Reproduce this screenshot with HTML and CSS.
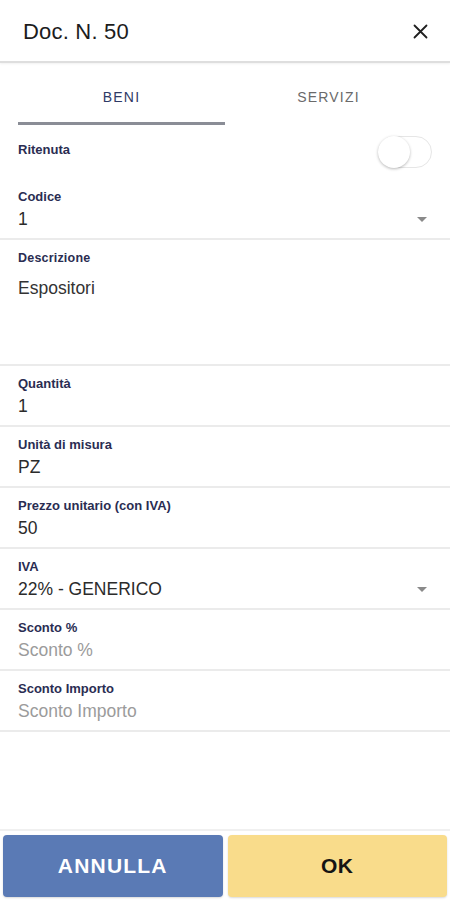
FILE: index.html
```html
<!DOCTYPE html>
<html lang="it">
<head>
<meta charset="utf-8">
<title>Doc. N. 50</title>
<link rel="stylesheet" href="styles.css">
</head>
<body>
<div class="screen">
  <header class="header">
    <h1 class="title">Doc. N. 50</h1>
    <button class="close" aria-label="Chiudi">
      <svg width="15" height="15" viewBox="0 0 15 15"><path d="M1.5 1.5 L13.5 13.5 M13.5 1.5 L1.5 13.5" stroke="#1f1f1f" stroke-width="1.8" stroke-linecap="round" fill="none"/></svg>
    </button>
  </header>

  <nav class="tabs">
    <div class="tab active">BENI</div>
    <div class="tab">SERVIZI</div>
  </nav>

  <main class="form">
    <div class="switch-row">
      <span class="label">Ritenuta</span>
      <span class="toggle"><span class="knob"></span></span>
    </div>

    <div class="field">
      <div class="label">Codice</div>
      <div class="value-row"><span class="value">1</span><span class="caret"></span></div>
    </div>

    <div class="field field-area">
      <div class="label label-alt">Descrizione</div>
      <div class="value value-area">Espositori</div>
    </div>

    <div class="field">
      <div class="label">Quantità</div>
      <div class="value">1</div>
    </div>

    <div class="field">
      <div class="label">Unità di misura</div>
      <div class="value">PZ</div>
    </div>

    <div class="field">
      <div class="label">Prezzo unitario (con IVA)</div>
      <div class="value">50</div>
    </div>

    <div class="field">
      <div class="label">IVA</div>
      <div class="value-row"><span class="value">22% - GENERICO</span><span class="caret"></span></div>
    </div>

    <div class="field">
      <div class="label">Sconto %</div>
      <div class="value placeholder">Sconto %</div>
    </div>

    <div class="field">
      <div class="label">Sconto Importo</div>
      <div class="value placeholder">Sconto Importo</div>
    </div>
  </main>

  <footer class="footer">
    <button class="btn btn-cancel">ANNULLA</button>
    <button class="btn btn-ok">OK</button>
  </footer>
</div>
</body>
</html>
```

FILE: styles.css
```css
* { box-sizing: border-box; }

html, body {
  margin: 0;
  padding: 0;
  background: #ffffff;
}

body {
  font-family: "Liberation Sans", Arial, Helvetica, sans-serif;
  color: #2a2a2a;
}

.screen {
  width: 450px;
  height: 900px;
  display: flex;
  flex-direction: column;
}

.header {
  height: 63px;
  display: flex;
  align-items: center;
  justify-content: space-between;
  padding: 2px 22px 0 23px;
  border-bottom: 2px solid #dedede;
  box-shadow: 0 1px 2px rgba(0, 0, 0, 0.06);
}

.title {
  margin: 0;
  font-size: 22px;
  font-weight: normal;
  color: #1c1c1c;
  letter-spacing: 0.2px;
}

.close {
  border: 0;
  background: none;
  padding: 0;
  width: 15px;
  height: 15px;
  display: flex;
}

.tabs {
  display: flex;
  padding: 0 18px;
}

.tab {
  flex: 1;
  text-align: center;
  font-size: 14px;
  letter-spacing: 1.2px;
  color: #6a6a6a;
  line-height: 18px;
  padding: 25px 0 16px;
  border-bottom: 3px solid transparent;
}

.tab.active {
  color: #2f3a66;
  border-bottom-color: #8a8d96;
}

.form {
  flex: 1;
}

.switch-row {
  height: 54px;
  display: flex;
  align-items: center;
  justify-content: space-between;
  padding: 0 18px;
}

.switch-row .label {
  margin-top: -4px;
}

.toggle {
  width: 54px;
  height: 32px;
  border-radius: 16px;
  background: #ffffff;
  border: 1px solid #e6e6e6;
  position: relative;
}

.knob {
  position: absolute;
  left: -1px;
  top: -1px;
  width: 32px;
  height: 32px;
  border-radius: 50%;
  background: #ffffff;
  box-shadow: 0 1px 3px rgba(0, 0, 0, 0.28);
}

.field {
  padding: 10px 23px 8px 18px;
  border-bottom: 2px solid #ebebeb;
}

.label {
  font-size: 13px;
  line-height: 16px;
  font-weight: bold;
  color: #2a2d52;
}

.label-alt {
  font-size: 12.5px;
  letter-spacing: 0.2px;
}

.value {
  font-size: 17.5px;
  line-height: 22px;
  color: #2b2b2b;
}

.value-row {
  margin-top: 3px;
  display: flex;
  align-items: center;
  justify-content: space-between;
}

.field > .value {
  margin-top: 3px;
}

.caret {
  width: 0;
  height: 0;
  border-left: 5px solid transparent;
  border-right: 5px solid transparent;
  border-top: 5px solid #8a8a8a;
  margin-top: 1px;
}

.field-area {
  height: 126px;
}

.field > .value-area {
  margin-top: 11px;
  color: #333333;
}

.placeholder {
  color: #9b9b9b;
}

.footer {
  display: flex;
  gap: 5px;
  padding: 4px 3px 3px;
  border-top: 2px solid #f0f0f0;
}

.btn {
  flex: 1;
  height: 62px;
  border: 0;
  border-radius: 4px;
  font-family: "Liberation Sans", Arial, Helvetica, sans-serif;
  font-size: 21px;
  font-weight: bold;
  letter-spacing: 1.2px;
  box-shadow: 0 1px 2px rgba(0, 0, 0, 0.15);
}

.btn-cancel {
  background: #5a7ab5;
  color: #ffffff;
}

.btn-ok {
  background: #f9dc8b;
  color: #141414;
  letter-spacing: 0.5px;
}
```
